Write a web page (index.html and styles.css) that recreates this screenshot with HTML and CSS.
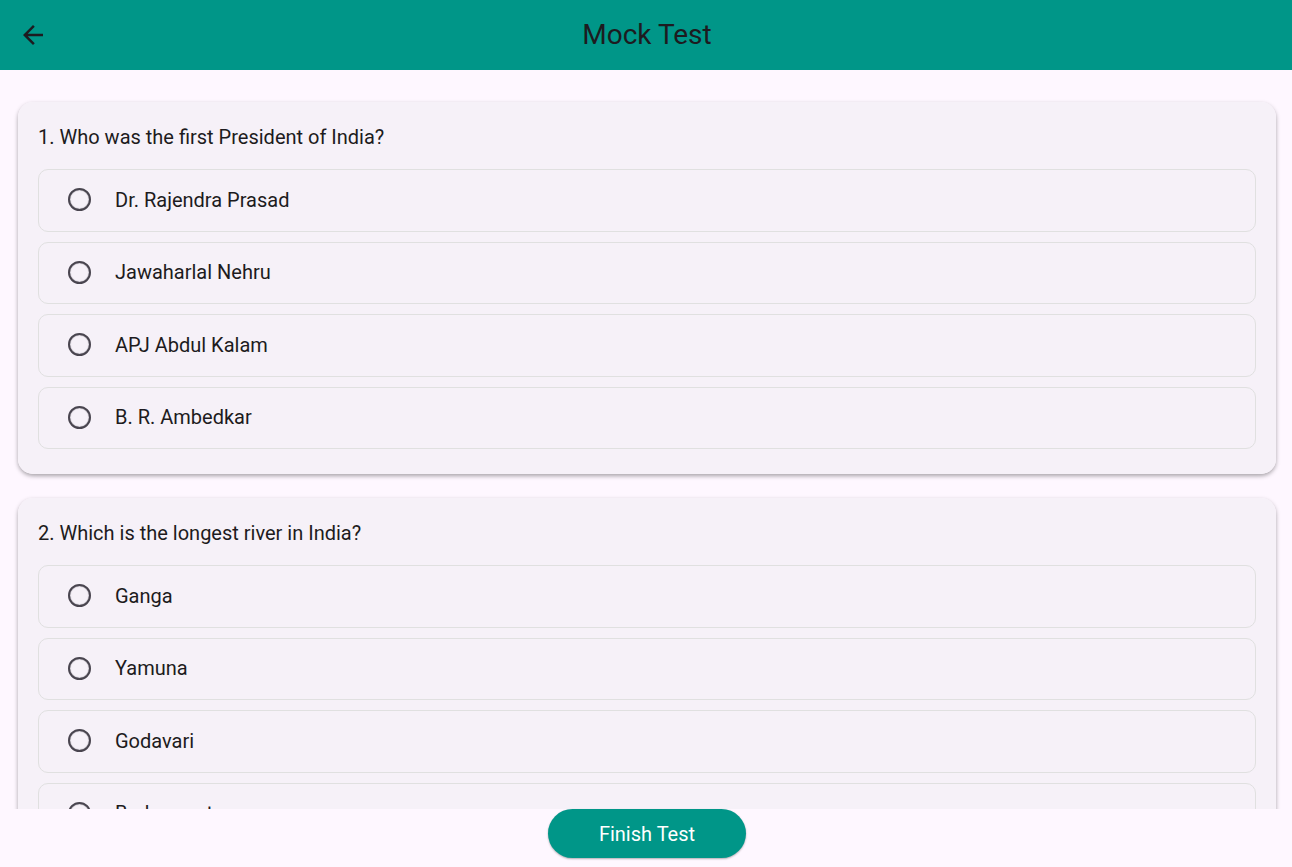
FILE: index.html
```html
<!DOCTYPE html>
<html lang="en">
<head>
<meta charset="utf-8">
<meta name="viewport" content="width=device-width, initial-scale=1">
<title>Mock Test</title>
<link rel="stylesheet" href="styles.css">
</head>
<body>
<header class="app-bar">
  <button class="back" type="button" aria-label="Back">
    <svg class="back-icon" viewBox="0 0 24 24" aria-hidden="true"><path d="M20 11H7.83l5.59-5.59L12 4l-8 8 8 8 1.41-1.41L7.83 13H20v-2z"/></svg>
  </button>
  <h1 class="title">Mock Test</h1>
</header>
<form class="test">
  <main class="questions">
    <fieldset class="card">
      <legend class="question">1. Who was the first President of India?</legend>
      <div class="options">
        <label class="option"><input class="radio" type="radio" name="q1"><span>Dr. Rajendra Prasad</span></label>
        <label class="option"><input class="radio" type="radio" name="q1"><span>Jawaharlal Nehru</span></label>
        <label class="option"><input class="radio" type="radio" name="q1"><span>APJ Abdul Kalam</span></label>
        <label class="option"><input class="radio" type="radio" name="q1"><span>B. R. Ambedkar</span></label>
      </div>
    </fieldset>
    <fieldset class="card">
      <legend class="question">2. Which is the longest river in India?</legend>
      <div class="options">
        <label class="option"><input class="radio" type="radio" name="q2"><span>Ganga</span></label>
        <label class="option"><input class="radio" type="radio" name="q2"><span>Yamuna</span></label>
        <label class="option"><input class="radio" type="radio" name="q2"><span>Godavari</span></label>
        <label class="option"><input class="radio" type="radio" name="q2"><span>Brahmaputra</span></label>
      </div>
    </fieldset>
  </main>
  <footer class="actions">
    <button class="finish" type="submit">Finish Test</button>
  </footer>
</form>
</body>
</html>
```
FILE: styles.css
```css
* {
  box-sizing: border-box;
}

body {
  margin: 0;
  height: 100vh;
  display: flex;
  flex-direction: column;
  background: #fef7ff;
  color: #1d1b20;
  font-family: Roboto, "Liberation Sans", sans-serif;
  font-size: 20px;
  line-height: 30px;
}

.app-bar {
  flex: none;
  display: grid;
  grid-template-columns: 72px 1fr 70px;
  align-items: center;
  height: 70px;
  background: #009688;
}

.back {
  display: flex;
  align-items: center;
  justify-content: center;
  width: 50px;
  height: 50px;
  margin: 0 0 0 8px;
  padding: 0;
  border: 0;
  border-radius: 50%;
  background: none;
  cursor: pointer;
}

.back-icon {
  width: 30px;
  height: 30px;
  fill: #1d1b20;
}

.title {
  margin: 0;
  font-size: 28px;
  font-weight: 400;
  line-height: 36px;
  text-align: center;
}

.test {
  flex: 1;
  min-height: 0;
  display: flex;
  flex-direction: column;
}

.questions {
  flex: 1;
  min-height: 0;
  display: flex;
  flex-direction: column;
  gap: 24px;
  padding: 32px 16px 32px 18px;
  overflow-y: auto;
  scrollbar-width: none;
}

.card {
  flex: none;
  min-width: 0;
  margin: 0;
  padding: 20px 20px 25px;
  border: 0;
  border-radius: 15px;
  background: #f6f1f8;
  box-shadow: 0 2px 4px rgba(0, 0, 0, 0.34);
}

.question {
  float: left;
  width: 100%;
  margin: 0 0 17px;
  padding: 0;
}

.options {
  clear: both;
  display: grid;
  grid-auto-rows: 1fr;
  gap: 10px;
  min-height: 280px;
}

.option {
  display: flex;
  align-items: center;
  gap: 24px;
  padding: 0 29px 1px;
  border: 1px solid #e0e0e0;
  border-radius: 10px;
  cursor: pointer;
}

.radio {
  appearance: none;
  flex: none;
  width: 23px;
  height: 23px;
  margin: 0;
  border: 2px solid #49454f;
  border-radius: 50%;
  box-shadow: inset 0 0 1px #49454f;
}

.radio:checked {
  border-color: #009688;
  background: radial-gradient(circle, #009688 50%, transparent 55%);
}

.actions {
  flex: none;
  display: flex;
  justify-content: center;
  padding: 0 0 9px 2px;
}

.finish {
  padding: 10px 51px 9px;
  border: 0;
  border-radius: 25px;
  background: #009688;
  color: #ffffff;
  font: inherit;
  box-shadow: 0 1px 2px rgba(0, 0, 0, 0.3);
  cursor: pointer;
}
```
